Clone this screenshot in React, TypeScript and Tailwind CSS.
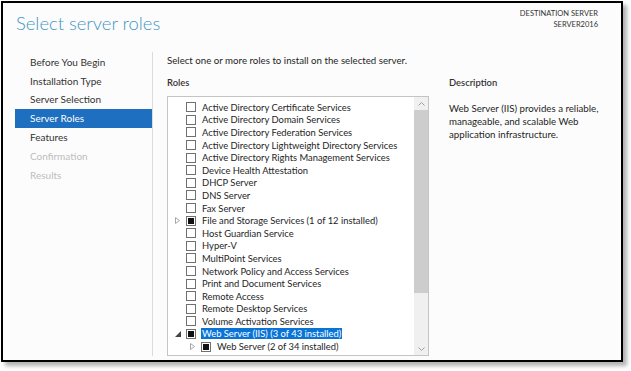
const navItems = [
  { label: 'Before You Begin', state: 'normal' },
  { label: 'Installation Type', state: 'normal' },
  { label: 'Server Selection', state: 'normal' },
  { label: 'Server Roles', state: 'active' },
  { label: 'Features', state: 'normal' },
  { label: 'Confirmation', state: 'disabled' },
  { label: 'Results', state: 'disabled' },
];

type Role = {
  label: string;
  partial?: boolean;
  expander?: 'closed' | 'open';
  nested?: boolean;
  selected?: boolean;
};

const roles: Role[] = [
  { label: 'Active Directory Certificate Services' },
  { label: 'Active Directory Domain Services' },
  { label: 'Active Directory Federation Services' },
  { label: 'Active Directory Lightweight Directory Services' },
  { label: 'Active Directory Rights Management Services' },
  { label: 'Device Health Attestation' },
  { label: 'DHCP Server' },
  { label: 'DNS Server' },
  { label: 'Fax Server' },
  { label: 'File and Storage Services (1 of 12 installed)', partial: true, expander: 'closed' },
  { label: 'Host Guardian Service' },
  { label: 'Hyper-V' },
  { label: 'MultiPoint Services' },
  { label: 'Network Policy and Access Services' },
  { label: 'Print and Document Services' },
  { label: 'Remote Access' },
  { label: 'Remote Desktop Services' },
  { label: 'Volume Activation Services' },
  { label: 'Web Server (IIS) (3 of 43 installed)', partial: true, expander: 'open', selected: true },
  { label: 'Web Server (2 of 34 installed)', partial: true, expander: 'closed', nested: true },
];

function Expander({ kind }: { kind?: 'closed' | 'open' }) {
  if (!kind) return <span className="w-[11px]" />;
  return (
    <span className="w-[11px] flex items-center">
      {kind === 'closed' ? (
        <svg width="5" height="7" viewBox="0 0 5 7">
          <path d="M0.5 0.5 L4.5 3.5 L0.5 6.5 Z" fill="none" stroke="#a6a6a6" strokeWidth="1" />
        </svg>
      ) : (
        <svg width="6" height="6" viewBox="0 0 6 6">
          <path d="M6 0 L6 6 L0 6 Z" fill="#444" />
        </svg>
      )}
    </span>
  );
}

function RoleRow({ role }: { role: Role }) {
  return (
    <div className={`h-[12.6px] flex items-center ${role.nested ? 'pl-[22px]' : 'pl-[7px]'}`}>
      <Expander kind={role.expander} />
      <span className="w-[10px] h-[10px] border border-[#707070] bg-white flex items-center justify-center shrink-0">
        {role.partial && <span className="w-[6px] h-[6px] bg-[#111]" />}
      </span>
      <span
        className={`whitespace-nowrap leading-[11px] ${
          role.selected ? 'ml-[5px] px-[1px] bg-[#0a74d6] text-white' : 'ml-[6px] text-[#1e1e1e]'
        }`}
      >
        {role.label}
      </span>
    </div>
  );
}

function Chevron({ up }: { up?: boolean }) {
  return (
    <svg width="7" height="4" viewBox="0 0 7 4">
      <path d={up ? 'M0.5 3.5 L3.5 0.5 L6.5 3.5' : 'M0.5 0.5 L3.5 3.5 L6.5 0.5'} fill="none" stroke="#a0a0a0" strokeWidth="1" />
    </svg>
  );
}

export default function App() {
  return (
    <div className="w-[631px] h-[371px] bg-white font-['Lato',sans-serif] text-[9.4px] overflow-hidden">
      <div className="ml-[1px] mt-[1px] w-[622px] h-[361px] border-2 border-black bg-[#fcfcfc] shadow-[4px_4px_4px_rgba(0,0,0,0.3)] flex flex-col">
        <header className="h-[49px] flex justify-between">
          <h1 className="pl-[13px] pt-[8px] text-[18.4px] leading-[24px] font-light text-[#3f96c4]">
            Select server roles
          </h1>
          <div className="pr-[23px] pt-[5px] text-right text-[7.5px] leading-[11px] text-[#333]">
            <div>DESTINATION SERVER</div>
            <div>SERVER2016</div>
          </div>
        </header>

        <div className="flex flex-1 min-h-0">
          <nav className="w-[150px] pl-[12px] pt-[1px] mb-[4px] border-r border-[#dcdcdc] text-[10px]">
            {navItems.map((item) => (
              <div
                key={item.label}
                className={`h-[18.8px] pl-[15px] flex items-center ${
                  item.state === 'active'
                    ? 'bg-[#1e6fc0] text-white'
                    : item.state === 'disabled'
                    ? 'text-[#bdbdbd]'
                    : 'text-[#333]'
                }`}
              >
                {item.label}
              </div>
            ))}
          </nav>

          <main className="pl-[14px] flex-1">
            <p className="pt-[1px] text-[9.7px] leading-[14px] text-[#1e1e1e]">
              Select one or more roles to install on the selected server.
            </p>
            <div className="mt-[9px] flex gap-[20px]">
              <section className="w-[262px]">
                <h2 className="leading-[14px] font-semibold text-[#333]">Roles</h2>
                <div className="mt-[6px] h-[260px] border border-[#c4c4c4] bg-white flex">
                  <div className="flex-1 pt-[4px]">
                    {roles.map((r) => (
                      <RoleRow key={r.label} role={r} />
                    ))}
                  </div>
                  <div className="w-[14px] bg-[#f0f0f0] flex flex-col">
                    <div className="h-[13px] flex items-center justify-center">
                      <Chevron up />
                    </div>
                    <div className="h-[183px] bg-[#cdcdcd]" />
                    <div className="flex-1" />
                    <div className="h-[13px] flex items-center justify-center">
                      <Chevron />
                    </div>
                  </div>
                </div>
              </section>
              <section className="flex-1">
                <h2 className="leading-[14px] font-semibold text-[#333]">Description</h2>
                <p className="mt-[12px] text-[9.7px] leading-[13px] text-[#1e1e1e] w-[160px]">
                  Web Server (IIS) provides a reliable, manageable, and scalable Web application infrastructure.
                </p>
              </section>
            </div>
          </main>
        </div>
      </div>
    </div>
  );
}
